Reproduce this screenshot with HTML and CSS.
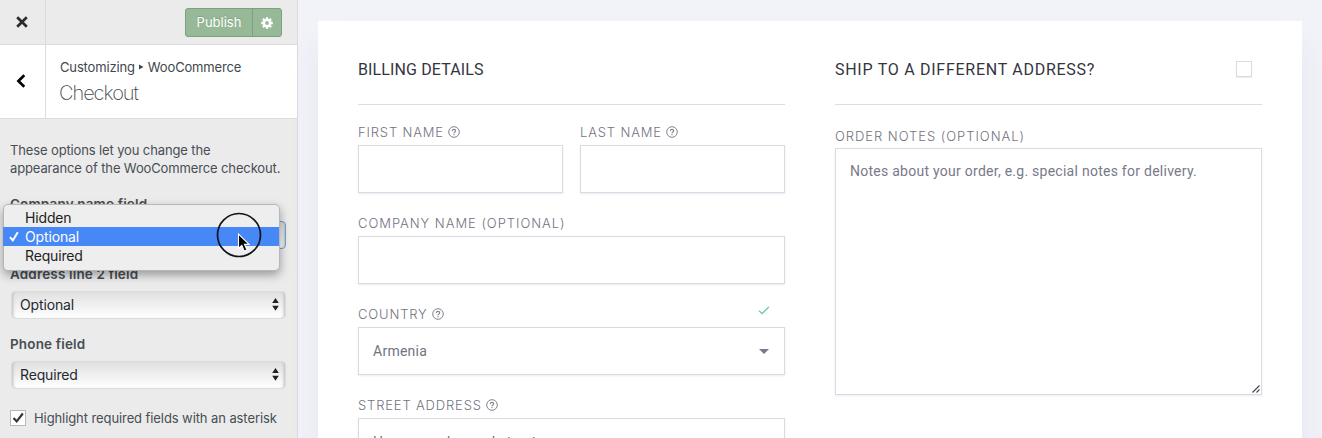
FILE: index.html
```html
<!DOCTYPE html>
<html lang="en">
<head>
<meta charset="utf-8">
<title>Customizing WooCommerce Checkout</title>
<link rel="stylesheet" href="styles.css">
</head>
<body>
<div class="app">
  <aside class="sidebar">
    <header class="topbar">
      <div class="close"><svg width="12" height="12" viewBox="0 0 12 12"><path d="M1.2 1.2 10.8 10.8M10.8 1.2 1.2 10.8" stroke="#2b2b2b" stroke-width="2.7"/></svg></div>
      <div class="publish">
        <span class="publish-text">Publish</span>
        <span class="publish-gear"><svg width="12" height="12" viewBox="-6 -6 12 12"><g stroke="#fff" stroke-width="2.3"><path d="M0-5.8V5.8M-5.8 0H5.8M-4.1-4.1 4.1 4.1M4.1-4.1-4.1 4.1"/></g><circle r="4.2" fill="#fff"/><circle r="1.9" fill="#98b998"/></svg></span>
      </div>
    </header>
    <div class="section-head">
      <div class="back"><svg width="10" height="14" viewBox="0 0 10 14"><path d="M8.3 1.3 2.4 7l5.9 5.7" fill="none" stroke="#000" stroke-width="2.6"/></svg></div>
      <div class="titles">
        <div class="crumb">Customizing <svg width="5" height="6" viewBox="0 0 5 6"><path d="M0 .6 4.5 3 0 5.4z" fill="#3f454c"/></svg> WooCommerce</div>
        <div class="title">Checkout</div>
      </div>
    </div>
    <div class="controls">
      <p class="description">These options let you change the<br>appearance of the WooCommerce checkout.</p>
      <div class="control">
        <div class="label">Company name field</div>
        <div class="select focused"></div>
        <div class="menu">
          <div class="option">Hidden</div>
          <div class="option selected"><svg class="tick" width="10" height="11" viewBox="0 0 10 11"><path d="M1 6.2 3.8 9.4 8.8 1.2" fill="none" stroke="#fff" stroke-width="2"/></svg>Optional</div>
          <div class="option">Required</div>
        </div>
        <svg class="pointer" width="46" height="46" viewBox="0 0 46 46"><circle cx="23" cy="23" r="21.5" fill="none" stroke="#10131c" stroke-width="1.7"/><path d="M22.5 22v14.5l3.3-3.1 2.5 5.7 2.7-1.2-2.5-5.5h4.6z" fill="#000" stroke="#fff" stroke-width="1.1"/></svg>
      </div>
      <div class="control">
        <div class="label">Address line 2 field</div>
        <div class="select">Optional<svg width="7" height="13" viewBox="0 0 7 13"><path d="M.2 5 3.5 0 6.8 5zM.2 7.8h6.6l-3.3 5z" fill="#222"/></svg></div>
      </div>
      <div class="control">
        <div class="label">Phone field</div>
        <div class="select">Required<svg width="7" height="13" viewBox="0 0 7 13"><path d="M.2 5 3.5 0 6.8 5zM.2 7.8h6.6l-3.3 5z" fill="#222"/></svg></div>
      </div>
      <div class="check-row"><span class="checkbox"><svg width="12" height="12" viewBox="0 0 12 12"><path d="M1.5 6 4.7 9.4 10.8 1.5" fill="none" stroke="#32373c" stroke-width="2.2"/></svg></span><span>Highlight required fields with an asterisk</span></div>
    </div>
  </aside>
  <main class="preview">
    <div class="card">
      <section class="column">
        <h3 class="heading">BILLING DETAILS</h3>
        <div class="row">
          <div class="field">
            <div class="flabel">FIRST NAME<svg class="help" viewBox="0 0 12 12"><use href="#q"/></svg></div>
            <div class="input"></div>
          </div>
          <div class="field">
            <div class="flabel">LAST NAME<svg class="help" viewBox="0 0 12 12"><use href="#q"/></svg></div>
            <div class="input"></div>
          </div>
        </div>
        <div class="field">
          <div class="flabel wide">COMPANY NAME (OPTIONAL)</div>
          <div class="input"></div>
        </div>
        <div class="field">
          <div class="flabel">COUNTRY<svg class="help" viewBox="0 0 12 12"><use href="#q"/></svg><svg class="valid" width="12" height="9" viewBox="0 0 12 9"><path d="M1 4.6 4 7.6 10.8 1" fill="none" stroke="#5fca96" stroke-width="1.3"/></svg></div>
          <div class="input">Armenia<svg width="10" height="5" viewBox="0 0 10 5"><path d="M0 0h10L5 5z" fill="#797989"/></svg></div>
        </div>
        <div class="field">
          <div class="flabel">STREET ADDRESS<svg class="help" viewBox="0 0 12 12"><use href="#q"/></svg></div>
          <div class="input">House number and street name</div>
        </div>
      </section>
      <section class="column">
        <h3 class="heading spaced">SHIP TO A DIFFERENT ADDRESS?<span class="ship-check"></span></h3>
        <div class="field notes">
          <div class="flabel wide">ORDER NOTES (OPTIONAL)</div>
          <div class="textarea">Notes about your order, e.g. special notes for delivery.<svg class="grip" width="8" height="8" viewBox="0 0 8 8"><path d="M.5 7.5 7.5.5M4.5 7.5l3-3" stroke="#444" stroke-width="1.1"/></svg></div>
        </div>
      </section>
    </div>
  </main>
</div>
<svg width="0" height="0" class="defs"><symbol id="q" viewBox="0 0 12 12"><circle cx="6" cy="6" r="5.3" fill="none" stroke="#82828f" stroke-width="1"/><path d="M4.3 4.9C4.3 2.8 7.7 2.9 7.7 4.8 7.7 6 6 5.9 6 7.2M6 8.1v1.1" fill="none" stroke="#82828f" stroke-width="1.1"/></symbol></svg>
</body>
</html>
```
FILE: styles.css
```css
* { box-sizing: border-box; }
body { margin: 0; height: 438px; overflow: hidden; font-family: Inter, "Liberation Sans", sans-serif; }
svg { display: block; flex: none; }
.defs { position: absolute; }
.app { display: flex; width: 1322px; height: 438px; overflow: hidden; }
.sidebar { width: 298px; flex: none; background: #ebebeb; border-right: 1px solid #dadae0; color: #484e54; font-size: 13px; }
.topbar { display: flex; justify-content: space-between; height: 45px; border-bottom: 1px solid #dcdcdc; }
.close { width: 46px; border-right: 1px solid #dcdcdc; display: flex; align-items: center; justify-content: center; padding-right: 2px; }
.publish { display: flex; width: 97px; height: 29px; margin: 8px 15px 0 0; background: #98b998; border: 1px solid #7da07e; border-radius: 3px; color: #fff; }
.publish-text { width: 67px; text-align: center; line-height: 27px; border-right: 1px solid #7da07e; font-size: 13px; text-shadow: 0 -1px 1px #7da07e; }
.publish-gear { flex: 1; display: flex; align-items: center; justify-content: center; }
.section-head { display: flex; height: 74px; background: #fff; border-bottom: 1px solid #dcdcdc; }
.back { width: 46px; border-right: 1px solid #dcdcdc; display: flex; align-items: center; justify-content: center; padding: 0 4px 2px 0; }
.titles { padding: 12px 0 0 14px; }
.crumb { display: flex; align-items: center; gap: 4px; line-height: 20px; font-size: 13px; letter-spacing: -.15px; color: #41474d; white-space: nowrap; }
.title { margin: 3px 0 0 -1px; font-size: 20px; font-weight: 200; line-height: 26px; color: #41474d; letter-spacing: -1.05px; }
.controls { padding: 22px 12px 0 10px; }
.description { margin: 0; line-height: 18px; font-size: 13px; letter-spacing: -.13px; white-space: nowrap; }
.control { position: relative; height: 70px; }
.description + .control { margin-top: 18px; }
.label { font-size: 13.5px; line-height: 18px; font-weight: 600; letter-spacing: .16px; }
.select { display: flex; align-items: center; justify-content: space-between; height: 28px; margin: 8px -1px 0 1px; padding: 0 6px 1px 8px; border: 1px solid #dcdcdc; border-radius: 4px; background: linear-gradient(#e0e0e0, #fff); box-shadow: inset 3px 0 3px -2px #bbb, inset -3px 0 3px -2px #bbb; color: #26292d; font-size: 14px; line-height: 17px; letter-spacing: -.15px; }
.select.focused { border-color: #6da2d5; }
.menu { position: absolute; z-index: 1; left: -7px; top: 9px; width: 277px; height: 67px; padding: 3px 0 5px; background: #eeeeee; border-radius: 5px; border: 1px solid #b7b7b7; box-shadow: 0 4px 10px rgba(0,0,0,.35); color: #222; }
.option { position: relative; height: 19px; line-height: 19px; padding-left: 21px; font-size: 14px; letter-spacing: -.15px; }
.option.selected { width: 276px; margin-left: -1px; padding-left: 22px; background: #4688f5; color: #fff; }
.tick { position: absolute; left: 6px; top: 4px; }
.pointer { position: absolute; z-index: 2; left: 206px; top: 17px; }
.check-row { display: flex; align-items: center; gap: 8px; height: 18px; margin-top: 4px; white-space: nowrap; letter-spacing: -.09px; }
.checkbox { width: 16px; height: 16px; background: #fff; border: 1px solid #b4b9be; display: flex; align-items: center; justify-content: center; }
.preview { flex: 1; padding: 21px 20px 0; background: #f2f3f9; }
.card { display: flex; gap: 50px; width: 984px; height: 560px; padding: 0 40px; background: #fff; box-shadow: 0 24px 30px rgba(60,60,130,.07); }
.column { width: 427px; }
.heading { display: flex; align-items: flex-start; height: 84px; margin: 0; padding-top: 39px; border-bottom: 1px solid #dddde4; font: 400 16px/20px Roboto, sans-serif; letter-spacing: .13px; color: #34343f; white-space: nowrap; }
.heading.spaced { letter-spacing: .73px; }
.ship-check { width: 16px; height: 16px; margin: 1px 10px 0 auto; border: 1px solid #dadae2; box-shadow: 0 1px 1px #eeeef2; }
.row { display: grid; grid-template-columns: 205px 205px; justify-content: space-between; margin-top: 19px; }
.field { height: 91px; }
.notes { margin-top: 22px; }
.flabel { position: relative; display: flex; align-items: center; gap: 4px; height: 21px; padding-bottom: 6px; font-size: 13px; font-weight: 300; letter-spacing: .84px; color: #737380; white-space: nowrap; }
.flabel.wide { letter-spacing: .96px; }
.notes .flabel { padding-bottom: 3px; }
.help { width: 12px; height: 12px; }
.valid { position: absolute; right: 15px; top: 0; }
.input { display: flex; align-items: center; justify-content: space-between; height: 48px; padding: 0 15px 0 14px; border: 1px solid #dadae2; box-shadow: 0 1px 2px #ececf2; font: 14px Roboto, sans-serif; letter-spacing: .26px; color: #737380; }
.textarea { position: relative; height: 247px; padding: 13px 14px; border: 1px solid #dadae2; box-shadow: 0 1px 2px #ececf2; font: 14px/18px Roboto, sans-serif; letter-spacing: .26px; color: #797989; }
.grip { position: absolute; right: 1px; bottom: 1px; }
```
